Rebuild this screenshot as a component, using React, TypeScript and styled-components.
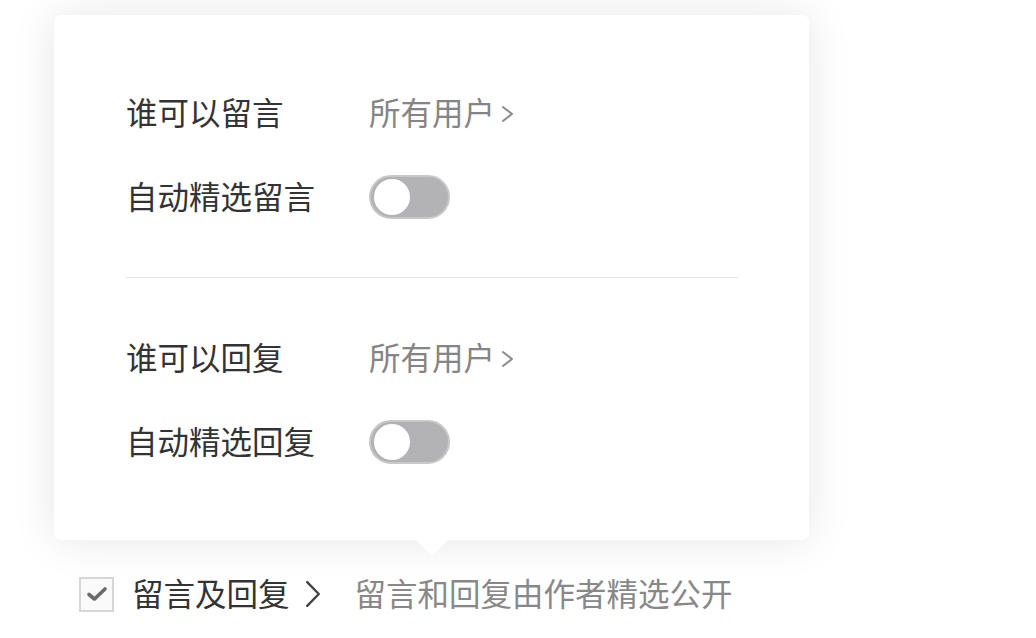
import styled, { createGlobalStyle } from 'styled-components';

const GlobalStyle = createGlobalStyle`
  html, body {
    margin: 0;
    padding: 0;
    background: #ffffff;
  }
  body {
    font-family: 'Noto Sans CJK SC', 'Noto Sans', sans-serif;
  }
`;

interface ISettingRow {
  label: string;
  value?: string;
  toggle?: boolean;
}

const commentRows: ISettingRow[] = [
  { label: '谁可以留言', value: '所有用户' },
  { label: '自动精选留言', toggle: false },
];

const replyRows: ISettingRow[] = [
  { label: '谁可以回复', value: '所有用户' },
  { label: '自动精选回复', toggle: false },
];

const Chevron = ({ w, h, color, stroke }: { w: number; h: number; color: string; stroke: number }) => (
  <svg width={w} height={h} viewBox={`0 0 ${w} ${h}`} fill="none">
    <path
      d={`M${stroke / 2 + 1} ${stroke / 2 + 1} L${w - stroke / 2 - 1} ${h / 2} L${stroke / 2 + 1} ${h - stroke / 2 - 1}`}
      stroke={color}
      strokeWidth={stroke}
      strokeLinecap="round"
      strokeLinejoin="round"
    />
  </svg>
);

const SettingLine = ({ label, value, toggle }: ISettingRow) => (
  <Row>
    <Label>{label}</Label>
    {value !== undefined && (
      <Value>
        <span>{value}</span>
        <Chevron w={13} h={18} color="#8a8a8a" stroke={2} />
      </Value>
    )}
    {toggle !== undefined && (
      <Switch $on={toggle}>
        <Knob $on={toggle} />
      </Switch>
    )}
  </Row>
);

const App = () => {
  return (
    <>
      <GlobalStyle />
      <Page>
        <Popover>
          {commentRows.map((r) => (
            <SettingLine key={r.label} {...r} />
          ))}
          <Divider />
          {replyRows.map((r) => (
            <SettingLine key={r.label} {...r} />
          ))}
          <Arrow />
        </Popover>
        <Bar>
          <CheckBox>
            <svg width="22" height="16" viewBox="0 0 22 16" fill="none">
              <path
                d="M3 8.5 L8.5 13 L19 3"
                stroke="#6a6a6a"
                strokeWidth="3.6"
                strokeLinecap="round"
                strokeLinejoin="round"
              />
            </svg>
          </CheckBox>
          <BarTitle>留言及回复</BarTitle>
          <BarChevron>
            <Chevron w={16} h={28} color="#444444" stroke={2.4} />
          </BarChevron>
          <BarHint>留言和回复由作者精选公开</BarHint>
        </Bar>
      </Page>
    </>
  );
};

const Page = styled.div`
  width: 1036px;
  height: 638px;
  box-sizing: border-box;
  padding: 15px 0 0 54px;
  overflow: hidden;
`;

const Popover = styled.div`
  position: relative;
  width: 755px;
  box-sizing: border-box;
  padding: 56px 71px 56px 72px;
  background: #ffffff;
  border-radius: 7px;
  box-shadow: 0 0 44px rgba(0, 0, 0, 0.1);
`;

const Row = styled.div`
  display: flex;
  align-items: center;
  height: 84px;
`;

const Text = styled.div`
  font-size: 31.5px;
  line-height: 1;
  padding-bottom: 3px;
`;

const Label = styled(Text)`
  width: 243px;
  color: #333333;
`;

const Value = styled(Text)`
  display: flex;
  align-items: center;
  gap: 6px;
  color: #858585;

  svg {
    margin-top: 4px;
  }
`;

const Switch = styled.div<{ $on: boolean }>`
  width: 81px;
  height: 44px;
  box-sizing: border-box;
  border: 2px solid ${(p) => (p.$on ? '#07c160' : '#c8c8c8')};
  border-radius: 22px;
  background: ${(p) => (p.$on ? '#07c160' : '#b3b3b5')};
  display: flex;
  align-items: center;
  padding: 0 3px;
  justify-content: ${(p) => (p.$on ? 'flex-end' : 'flex-start')};
`;

const Knob = styled.div<{ $on: boolean }>`
  width: 36px;
  height: 36px;
  border-radius: 50%;
  background: #ffffff;
`;

const Divider = styled.div`
  height: 1px;
  background: #e3e3e3;
  margin: 38px 0 38px;
`;

const Arrow = styled.div`
  position: absolute;
  left: 362px;
  bottom: -16px;
  width: 0;
  height: 0;
  border-left: 16px solid transparent;
  border-right: 16px solid transparent;
  border-top: 16px solid #ffffff;
`;

const Bar = styled.div`
  display: flex;
  align-items: center;
  height: 68px;
  margin-top: 20px;
  padding-left: 25px;
`;

const CheckBox = styled.div`
  width: 35px;
  height: 35px;
  box-sizing: border-box;
  border: 2px solid #d6d6d6;
  background: #fafafa;
  display: flex;
  align-items: center;
  justify-content: center;
  margin-right: 18px;
`;

const BarTitle = styled(Text)`
  color: #333333;
`;

const BarChevron = styled.div`
  display: flex;
  margin-left: 15px;
  margin-right: 34px;
`;

const BarHint = styled(Text)`
  color: #888888;
`;

export default App;
